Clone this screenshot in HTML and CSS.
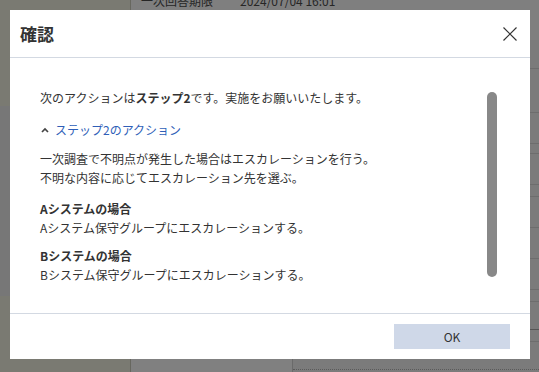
FILE: index.html
```html
<!DOCTYPE html>
<html lang="ja">
<head>
<meta charset="utf-8">
<title>確認</title>
<link rel="stylesheet" href="styles.css">
</head>
<body>
<div class="screen">
  <div class="backdrop">
    <div class="bg-top">
      <div class="bg-top-left"></div>
      <div class="bg-top-main"><span class="bg-label">一次回答期限</span><span class="bg-value">2024/07/04 16:01</span></div>
    </div>
    <div class="bg-rows">
      <div class="bg-col-a">
        <div class="seg olive s1"></div>
        <div class="seg gray s2"></div>
        <div class="seg olive s3"></div>
      </div>
      <div class="bg-col-b"></div>
      <div class="bg-col-c">
        <div class="r r29"></div>
        <div class="r r44"></div>
        <div class="r r31"></div>
        <div class="r r10"></div>
        <div class="r r31"></div>
        <div class="r r12"></div>
        <div class="r r31"></div>
        <div class="r r31"></div>
        <div class="r r31"></div>
        <div class="r r12"></div>
        <div class="r r28 dark"></div>
        <div class="r r12"></div>
        <div class="r r28 dotted"></div>
      </div>
    </div>
  </div>

  <div class="dialog" role="dialog" aria-labelledby="dlg-title">
    <div class="dialog-header">
      <h1 id="dlg-title" class="dialog-title">確認</h1>
      <button class="close-btn" aria-label="閉じる">
        <svg width="14" height="14" viewBox="0 0 14 14"><path d="M0.5 0.5 L13.5 13.5 M13.5 0.5 L0.5 13.5" stroke="#333" stroke-width="1.2" fill="none"/></svg>
      </button>
    </div>
    <div class="dialog-body">
      <div class="body-content">
        <p class="intro">次のアクションは<b>ステップ2</b>です。実施をお願いいたします。</p>
        <div class="toggle">
          <svg class="chev" width="8" height="6" viewBox="0 0 8 6"><path d="M1 5 L4 2 L7 5" stroke="#444" stroke-width="1.7" fill="none"/></svg>
          <span class="toggle-text">ステップ2のアクション</span>
        </div>
        <p class="para">一次調査で不明点が発生した場合はエスカレーションを行う。<br>不明な内容に応じてエスカレーション先を選ぶ。</p>
        <div class="case case-a">
          <div class="case-title">Aシステムの場合</div>
          <div>Aシステム保守グループにエスカレーションする。</div>
        </div>
        <div class="case case-b">
          <div class="case-title">Bシステムの場合</div>
          <div>Bシステム保守グループにエスカレーションする。</div>
        </div>
      </div>
      <div class="scroll-track"><div class="scroll-thumb"></div></div>
    </div>
    <div class="dialog-footer">
      <button class="ok-btn">OK</button>
    </div>
  </div>
</div>
</body>
</html>
```

FILE: styles.css
```css
* { box-sizing: border-box; }
html, body {
  margin: 0;
  padding: 0;
}
body {
  width: 539px;
  height: 372px;
  overflow: hidden;
  font-family: "Noto Sans CJK JP", "Noto Sans", sans-serif;
  color: #333;
}
.screen {
  position: relative;
  width: 539px;
  height: 372px;
  overflow: hidden;
}

/* dimmed page behind the modal */
.backdrop {
  display: flex;
  flex-direction: column;
  height: 372px;
}
.bg-top {
  display: flex;
  height: 40px;
}
.bg-top-left {
  width: 131px;
  background: #7a7a72;
  border-right: 1px solid #67675f;
}
.bg-top-main {
  flex: 1;
  background: #7f7f7f;
  padding-left: 10px;
  font-size: 12px;
  line-height: 19px;
  color: #262626;
  display: flex;
  align-items: flex-start;
}
.bg-label, .bg-value {
  margin-top: -9px;
}
.bg-value { margin-left: 27px; }
.bg-rows {
  display: flex;
  flex: 1;
}
.bg-col-a {
  width: 131px;
  display: flex;
  flex-direction: column;
  border-right: 1px solid #67675f;
}
.seg.olive { background: #7a7a72; }
.seg.gray { background: #777777; }
.s1 { height: 66px; }
.s2 { height: 190px; }
.s3 { flex: 1; }
.bg-col-b {
  width: 162px;
  background: #808080;
  border-right: 1px solid #6a6a6a;
}
.bg-col-c {
  flex: 1;
  background: #7b7b7b;
  display: flex;
  flex-direction: column;
}
.r { border-bottom: 1px solid #6d6d6d; }
.r.dark { border-bottom-color: #555; }
.r.dotted { border-bottom: 1px dotted #5a5a5a; }
.r10 { height: 10px; }
.r12 { height: 12px; }
.r28 { height: 28px; }
.r29 { height: 29px; }
.r31 { height: 31px; }
.r44 { height: 44px; }

/* modal */
.dialog {
  position: absolute;
  top: 10px;
  left: 10px;
  width: 520px;
  height: 349px;
  background: #fff;
  display: flex;
  flex-direction: column;
}
.dialog-header {
  height: 48px;
  border-bottom: 1px solid #d3d9e2;
  display: flex;
  align-items: center;
  justify-content: space-between;
  padding: 0 13px 0 10px;
}
.dialog-title {
  margin: 0;
  font-size: 17px;
  font-weight: bold;
  line-height: 24px;
  color: #333;
}
.close-btn {
  border: 0;
  background: none;
  padding: 0;
  width: 14px;
  height: 14px;
  display: flex;
}
.dialog-body {
  height: 255px;
  display: flex;
}
.body-content {
  flex: 1;
  padding: 30px 0 0 30px;
  font-size: 12px;
  line-height: 19px;
  color: #333;
}
.body-content p { margin: 0; }
.intro b { font-weight: bold; }
.toggle {
  margin-top: 13px;
  display: flex;
  align-items: center;
  height: 19px;
}
.chev { margin: 0 6px 0 1px; }
.toggle-text { color: #2f5fb8; }
.para { margin-top: 10px !important; }
.case-a { margin-top: 12px; }
.case-b { margin-top: 9px; }
.case-title { font-weight: bold; }
.scroll-track {
  width: 10px;
  margin-right: 33px;
  padding-top: 34px;
}
.scroll-thumb {
  width: 10px;
  height: 185px;
  border-radius: 5px;
  background: #888;
}
.dialog-footer {
  flex: 1;
  border-top: 1px solid #d3d9e2;
  display: flex;
  justify-content: flex-end;
  align-items: flex-start;
  padding: 10px 20px 0 0;
}
.ok-btn {
  width: 116px;
  height: 25px;
  border: 0;
  background: #cfd8e8;
  font-family: "Noto Sans CJK JP", "Noto Sans", sans-serif;
  font-size: 12px;
  color: #333;
  padding: 0;
}
```
